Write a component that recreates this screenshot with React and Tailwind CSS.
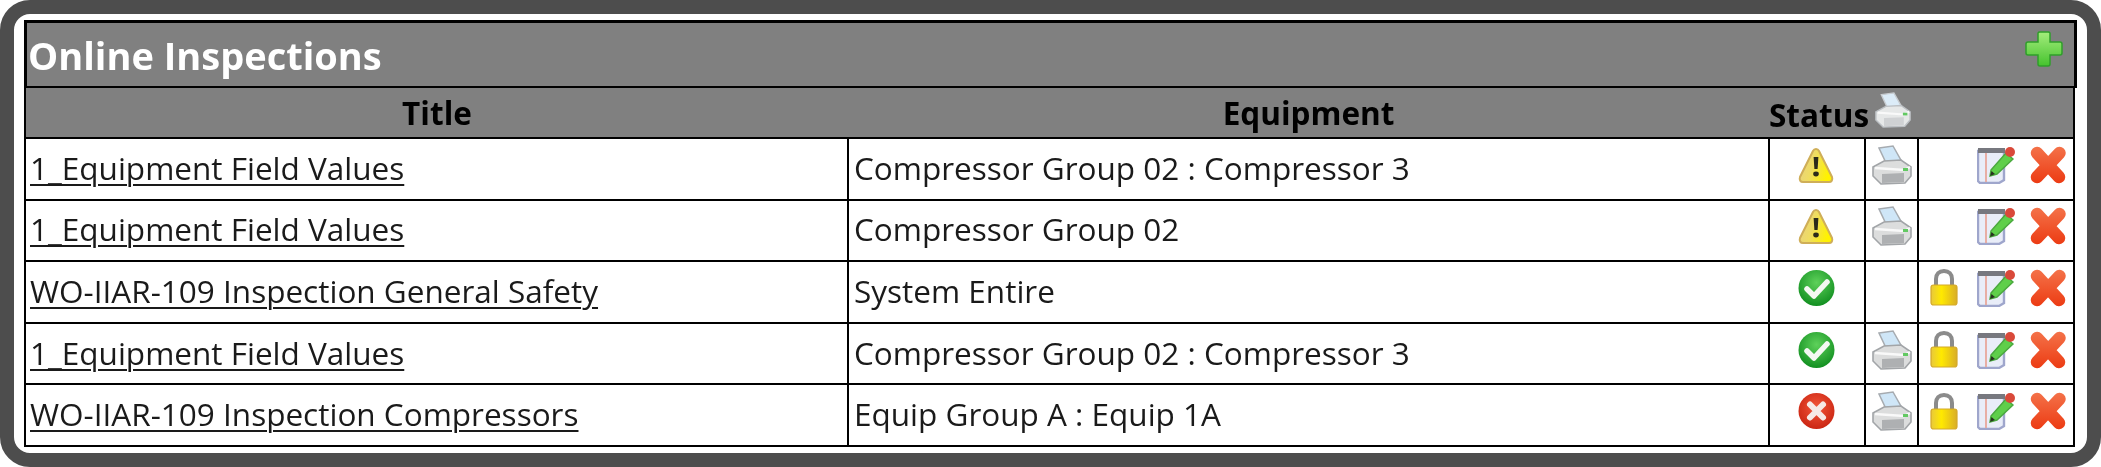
import React from 'react';

const rows = [
    { title: '1_Equipment Field Values', equipment: 'Compressor Group 02 : Compressor 3', status: 'warn', print: true, lock: false },
    { title: '1_Equipment Field Values', equipment: 'Compressor Group 02', status: 'warn', print: true, lock: false },
    { title: 'WO-IIAR-109 Inspection General Safety', equipment: 'System Entire', status: 'ok', print: false, lock: true },
    { title: '1_Equipment Field Values', equipment: 'Compressor Group 02 : Compressor 3', status: 'ok', print: true, lock: true },
    { title: 'WO-IIAR-109 Inspection Compressors', equipment: 'Equip Group A : Equip 1A', status: 'fail', print: true, lock: true },
];

const PlusIcon = () => (
    <svg width="38" height="36" viewBox="0 0 38 36">
        <defs>
            <linearGradient id="plusFill" x1="0" y1="0" x2="0" y2="1">
                <stop offset="0" stopColor="#a4ec7c" />
                <stop offset="1" stopColor="#45c32e" />
            </linearGradient>
        </defs>
        <path d="M13 2 a2 2 0 0 1 2-1 h8 a2 2 0 0 1 2 1 v9 h10 a2 2 0 0 1 2 2 v9 a2 2 0 0 1-2 2 h-10 v9 a2 2 0 0 1-2 2 h-8 a2 2 0 0 1-2-2 v-9 h-10 a2 2 0 0 1-2-2 v-9 a2 2 0 0 1 2-2 h10 z" fill="url(#plusFill)" stroke="#2f9e2a" strokeWidth="1.5" />
    </svg>
);

const PrinterIcon = ({ size = 40, light = false }) => (
    <svg width={size} height={size} viewBox="0 0 40 40">
        <path d="M7 3 L21 1 L30 17 L15 20 Z" fill={light ? '#dcecf8' : '#cfe6f7'} stroke={light ? '#c8ccd0' : '#a6abb0'} strokeWidth="1.5" />
        <path d="M1 22 L12 16 L29 15 L39 22 L39 31 L33 38 L9 39 L1 31 Z" fill={light ? '#e6e8e8' : '#dcdddd'} stroke={light ? '#bcc0c4' : '#a2a5a8'} strokeWidth="1.6" />
        <path d="M3 23 L32 25 L38 22" fill="none" stroke="#f9f9f9" strokeWidth="2.4" />
        <path d="M10 29 L32 28 L32 37 L10 38 Z" fill={light ? '#cfd1d3' : '#aeb0b2'} />
        <path d="M31 23 h5 v3 h-5 z" fill="#62c962" />
    </svg>
);

const WarnIcon = () => (
    <svg width="36" height="36" viewBox="0 0 36 36">
        <defs>
            <linearGradient id="warnFill" x1="0" y1="0" x2="1" y2="0.3">
                <stop offset="0" stopColor="#e6cf86" />
                <stop offset="0.5" stopColor="#efdc62" />
                <stop offset="1" stopColor="#fff200" />
            </linearGradient>
        </defs>
        <path d="M18 2 C19.5 2 20.5 3 21 4 L34 30 C35 33 33.5 35 31 35 H5 C2.5 35 1 33 2 30 L15 4 C15.5 3 16.5 2 18 2 Z" fill="url(#warnFill)" stroke="#cfae58" strokeWidth="2" />
        <path d="M15.6 10 h4.8 l-0.8 12 h-3.2 z" fill="#2c2a1a" />
        <ellipse cx="18" cy="27" rx="2.8" ry="2.4" fill="#2c2a1a" />
    </svg>
);

const OkIcon = () => (
    <svg width="37" height="38" viewBox="0 0 37 38">
        <defs>
            <radialGradient id="okFill" cx="0.5" cy="0.35" r="0.7">
                <stop offset="0" stopColor="#5ed15a" />
                <stop offset="1" stopColor="#0c8a1c" />
            </radialGradient>
        </defs>
        <circle cx="18.5" cy="19" r="18" fill="url(#okFill)" />
        <path d="M9 20 L16 27 L29 13" fill="none" stroke="#f4f8f2" strokeWidth="5.5" strokeLinecap="round" strokeLinejoin="round" />
    </svg>
);

const FailIcon = () => (
    <svg width="37" height="38" viewBox="0 0 37 38">
        <defs>
            <radialGradient id="failFill" cx="0.5" cy="0.4" r="0.7">
                <stop offset="0" stopColor="#f3563a" />
                <stop offset="1" stopColor="#c41e0c" />
            </radialGradient>
        </defs>
        <circle cx="18.5" cy="19" r="18" fill="url(#failFill)" />
        <path d="M12 12.5 L25 25.5 M25 12.5 L12 25.5" stroke="#f6e9e6" strokeWidth="6" strokeLinecap="round" />
    </svg>
);

const LockIcon = () => (
    <svg width="28" height="37" viewBox="0 0 28 37">
        <defs>
            <linearGradient id="lockFill" x1="0" y1="0" x2="1" y2="0">
                <stop offset="0" stopColor="#e8c83c" />
                <stop offset="0.4" stopColor="#ffe900" />
                <stop offset="1" stopColor="#d9ae28" />
            </linearGradient>
        </defs>
        <path d="M6 18 V10 C6 5 9 2 14 2 C19 2 22 5 22 10 V18" fill="none" stroke="#8b8b8b" strokeWidth="4" />
        <rect x="1" y="16" width="26" height="20" rx="2.5" fill="url(#lockFill)" stroke="#d4a92a" strokeWidth="1.2" />
    </svg>
);

const EditIcon = () => (
    <svg width="38" height="38" viewBox="0 0 38 38">
        <path d="M1 5 H27 V34 L22 37 H3 L1 35 Z" fill="#e9edf8" stroke="#9fa6cc" strokeWidth="2.4" />
        <path d="M1 2 H28 V7 H1 Z" fill="#77787f" />
        <path d="M9 7 V36" stroke="#e8a79b" strokeWidth="1.8" />
        <path d="M14 24 L29 7 L36 13 L20 28 L13 30 Z" fill="#5fcf4a" stroke="#4aa83e" strokeWidth="1.4" />
        <circle cx="33" cy="6" r="5" fill="#d9493a" />
        <path d="M13 30 L14.5 25 L18 28 Z" fill="#27331f" />
    </svg>
);

const DeleteIcon = () => (
    <svg width="38" height="38" viewBox="0 0 38 38">
        <defs>
            <linearGradient id="delFill" x1="0" y1="0" x2="0" y2="38" gradientUnits="userSpaceOnUse">
                <stop offset="0" stopColor="#f4734a" />
                <stop offset="1" stopColor="#ec3a12" />
            </linearGradient>
        </defs>
        <path d="M8 7 L30 31 M30.5 7 L8 31" stroke="url(#delFill)" strokeWidth="12.5" strokeLinecap="round" fill="none" />
    </svg>
);

const statusIcons = { warn: WarnIcon, ok: OkIcon, fail: FailIcon };

export default function App() {
    return (
        <div className="h-[467px] w-[2101px] bg-white font-['Open_Sans','Noto_Sans',sans-serif] text-black blur-[0.5px]">
            <div className="h-full border-[14px] border-[#4d4d4d] rounded-[30px] bg-white pt-[6px] px-[10px]">
                {/* Title bar */}
                <div className="flex h-[68px] items-start justify-between border-[3px] border-b-2 border-black bg-[#808080] pl-[1px] pr-[11px]">
                    <h2 className="mt-[7px] text-[38px] font-bold leading-[50px] text-white">Online Inspections</h2>
                    <div className="mt-[8px]"><PlusIcon /></div>
                </div>

                <table className="w-[2049px] table-fixed border-collapse border-2 border-t-0 border-black text-[31.5px] leading-[40px] text-[#1a1a1a]">
                    <colgroup>
                        <col className="w-[823px]" />
                        <col className="w-[921px]" />
                        <col className="w-[96px]" />
                        <col className="w-[53px]" />
                        <col className="w-[156px]" />
                    </colgroup>
                    <thead>
                        <tr className="h-[50px] bg-[#808080] text-black">
                            <th className="border-b-2 border-black p-0 text-center font-bold">Title</th>
                            <th className="border-b-2 border-black p-0 text-center font-bold">Equipment</th>
                            <th colSpan={3} className="border-b-2 border-black p-0 text-left font-bold">
                                <div className="flex items-start">
                                    <span className="mt-[5px]">Status</span>
                                    <span className="ml-[6px] mt-[2px]"><PrinterIcon size={36} light /></span>
                                </div>
                            </th>
                        </tr>
                    </thead>
                    <tbody>
                        {rows.map((row, i) => {
                            const StatusIcon = statusIcons[row.status];
                            return (
                                <tr key={i} className="h-[61.6px]">
                                    <td className="border-2 border-black p-0 pb-[2px] pl-[4px]">
                                        <a className="underline decoration-2 underline-offset-[4px]">{row.title}</a>
                                    </td>
                                    <td className="border-2 border-black p-0 pb-[2px] pl-[5px]">{row.equipment}</td>
                                    <td className="border-2 border-black p-0">
                                        <div className="flex justify-center pb-[8px] pr-[2px]"><StatusIcon /></div>
                                    </td>
                                    <td className="border-2 border-black p-0">
                                        <div className="flex justify-center pb-[8px]">{row.print && <PrinterIcon />}</div>
                                    </td>
                                    <td className="border-2 border-black p-0">
                                        <div className="flex items-center justify-end gap-[14px] pb-[8px] pr-[6px]">
                                            {row.lock && <span className="mr-[5px]"><LockIcon /></span>}
                                            <EditIcon />
                                            <DeleteIcon />
                                        </div>
                                    </td>
                                </tr>
                            );
                        })}
                    </tbody>
                </table>
            </div>
        </div>
    );
}
